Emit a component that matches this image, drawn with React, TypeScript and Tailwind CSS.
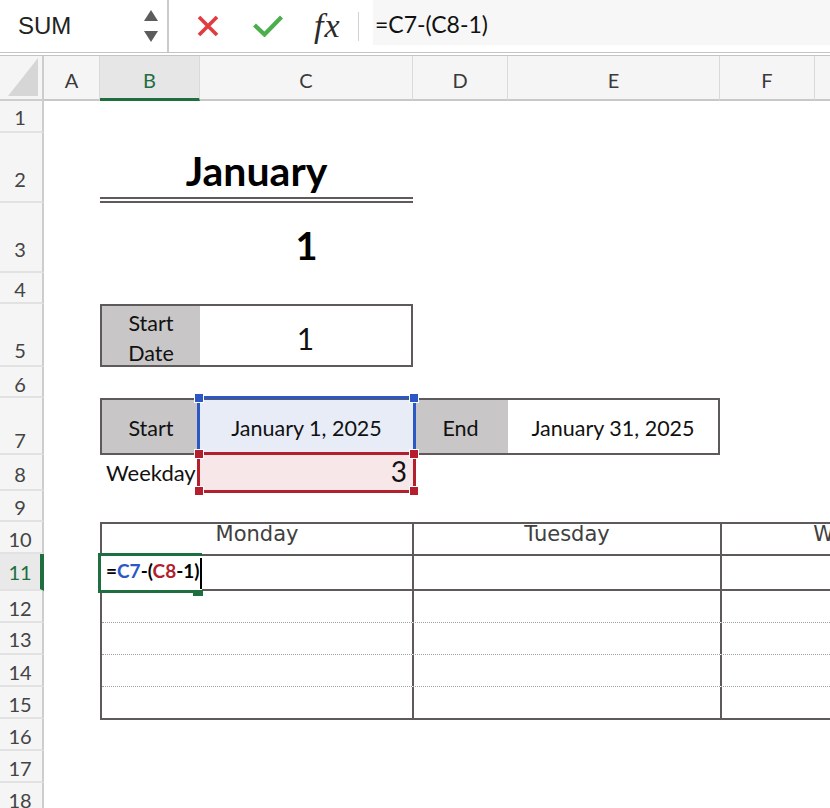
import React from "react";

const colHeads = [
  { label: "A", selected: false },
  { label: "B", selected: true },
  { label: "C", selected: false },
  { label: "D", selected: false },
  { label: "E", selected: false },
  { label: "F", selected: false },
  { label: "G", selected: false },
  { label: "H", selected: false },
];

// row number + its grid placement / bottom padding (Excel bottom-aligns the numbers)
const rowHeads = [
  { n: 1, cls: "row-start-2 pb-[4px]" },
  { n: 2, cls: "row-start-3 pb-[12px]" },
  { n: 3, cls: "row-start-4 pb-[12px]" },
  { n: 4, cls: "row-start-5 pb-[3px]" },
  { n: 5, cls: "row-start-6 pb-[5px]" },
  { n: 6, cls: "row-start-7 pb-[2px]" },
  { n: 7, cls: "row-start-8 pb-[3px]" },
  { n: 8, cls: "row-start-9 pb-[5px]" },
  { n: 9, cls: "row-start-10 pb-[3px]" },
  { n: 10, cls: "row-start-11 pb-[3px]" },
  { n: 11, cls: "row-start-12 pb-[7px]" },
  { n: 12, cls: "row-start-13 pb-[3px]" },
  { n: 13, cls: "row-start-14 pb-[4px]" },
  { n: 14, cls: "row-start-15 pb-[3px]" },
  { n: 15, cls: "row-start-16 pb-[3px]" },
  { n: 16, cls: "row-start-17 pb-[3px]" },
  { n: 17, cls: "row-start-18 pb-[3px]" },
  { n: 18, cls: "row-start-19 pb-[3px]" },
];

const days = ["Monday", "Tuesday", "Wednesday"];

function Handle({ pos, color }: { pos: string; color: string }) {
  return <span className={`absolute h-[10px] w-[10px] border border-white ${pos} ${color}`} />;
}

function FormulaBar() {
  return (
    <div className="flex h-[56px] border-b-4 border-double border-[#c4c4c4]">
      <div className="flex w-[169px] items-center justify-between border-r-2 border-[#cbcbcb] pl-[18px] pr-[9px]">
        <span className="font-['Liberation_Sans',sans-serif] text-[24px] text-[#222]">SUM</span>
        <svg width="14" height="32" viewBox="0 0 14 32">
          <polygon points="7,0 14,11 0,11" fill="#5c5c5c" />
          <polygon points="0,21 14,21 7,32" fill="#5c5c5c" />
        </svg>
      </div>
      <svg className="ml-[28px] self-center" width="22" height="20" viewBox="0 0 22 20">
        <path d="M2 1 L20 19 M20 1 L2 19" stroke="#e13b40" strokeWidth="3.6" fill="none" />
      </svg>
      <svg className="ml-[34px] self-center" width="30" height="22" viewBox="0 0 30 22">
        <path d="M1.5 10 L11.5 19.5 L28.5 2" stroke="#4cae4c" strokeWidth="4.2" fill="none" />
      </svg>
      <span className="ml-[31px] w-[28px] self-center font-['Liberation_Serif',serif] text-[34px] italic leading-[32px] tracking-[1px] text-[#2b2b2b]">
        fx
      </span>
      <span className="ml-[16px] h-[29px] w-px self-center bg-[#d2d2d2]" />
      <div className="ml-[14px] flex h-[45px] flex-1 items-center bg-[#f7f7f7] pl-[2px] pt-[4px] text-[23px] text-[#111]">
        =C7-(C8-1)
      </div>
    </div>
  );
}

export default function App() {
  return (
    <div className="h-[808px] w-[830px] overflow-hidden bg-white font-['Lato',sans-serif] text-[#111]">
      <FormulaBar />

      <div className="grid w-[1005px] grid-cols-[44px_56px_100px_213px_95px_212px_95px_95px_95px] grid-rows-[45px_32px_70px_70px_31px_63px_31px_57px_36px_31px_32px_37px_32px_32px_32px_32px_32px_32px_32px]">
        {/* corner */}
        <div className="col-start-1 row-start-1 border-b-2 border-r-2 border-[#cdcdcd] bg-[#f5f5f5]">
          <svg width="42" height="43" viewBox="0 0 42 43">
            <polygon points="8,40 38,40 38,2" fill="#d6d6d6" />
          </svg>
        </div>

        {colHeads.map((c) => (
          <div
            key={c.label}
            className={
              c.selected
                ? "row-start-1 flex items-center justify-center border-r border-r-[#dadada] border-b-[3px] border-b-[#1f6e3f] bg-[#e6e6e6] pt-[5px] text-[20px] leading-[20px] text-[#1f6e3f]"
                : "row-start-1 flex items-center justify-center border-r border-r-[#dadada] border-b-2 border-b-[#c8c8c8] bg-[#f5f5f5] pt-[4px] text-[20px] leading-[20px] text-[#3a3a3a]"
            }
          >
            {c.label}
          </div>
        ))}

        {rowHeads.map((r) => (
          <div
            key={r.n}
            className={`${r.cls} ${
              r.n === 11
                ? "col-start-1 flex items-end justify-center border-b-2 border-b-[#e2e2e2] border-r-[4px] border-r-[#1f6e3f] bg-[#e9e9e9] text-[20px] leading-[20px] text-[#1f6e3f]"
                : "col-start-1 flex items-end justify-center border-b-2 border-b-[#e2e2e2] border-r-2 border-r-[#cdcdcd] bg-[#f5f5f5] pr-[2px] text-[20px] leading-[20px] text-[#444]"
            }`}
          >
            {r.n}
          </div>
        ))}

        {/* month title */}
        <div className="col-span-2 col-start-3 row-start-3 flex items-end justify-center border-b-[6px] border-double border-b-[#5f5b5b] pb-[6px] text-[41px] font-bold leading-[40px] text-black">
          January
        </div>
        <div className="col-start-4 row-start-4 flex items-end justify-center pb-[9px] text-[38px] font-bold leading-[38px] text-black">
          1
        </div>

        {/* start date */}
        <div className="col-span-2 col-start-3 row-start-6 flex border-2 border-[#5e5a5b]">
          <div className="flex w-[98px] flex-col items-center justify-center bg-[#c8c6c7] pt-[4px] text-[21.5px] leading-[30px]">
            <span>Start</span>
            <span>Date</span>
          </div>
          <div className="flex flex-1 items-center justify-center pt-[4px] text-[30px] leading-[30px]">1</div>
        </div>

        {/* start / end */}
        <div className="col-span-4 col-start-3 row-start-8 grid grid-cols-[98px_213px_95px_1fr] border-2 border-[#5e5a5b] text-[21.5px] leading-[21px]">
          <div className="flex items-center justify-center bg-[#c8c6c7] pt-[3px]">Start</div>
          <div className="flex items-center justify-center bg-[#e8ecf7] pt-[3px]">January 1, 2025</div>
          <div className="flex items-center justify-center bg-[#c8c6c7] pt-[3px]">End</div>
          <div className="flex items-center justify-center pt-[3px]">January 31, 2025</div>
        </div>

        <div className="col-start-3 row-start-9 flex items-center whitespace-nowrap pl-[6px] text-[22px] leading-[22px]">Weekday</div>
        <div className="col-start-4 row-start-9 flex items-center justify-end bg-[#f8e7e8] pb-[4px] pr-[6px] text-[28px] leading-[28px]">
          3
        </div>

        {/* formula reference highlights */}
        <div className="relative z-10 col-start-4 row-start-8 -mx-[3px] -mt-[2px] border-[3px] border-[#2b58c5]">
          <Handle pos="-left-[6px] -top-[6px]" color="bg-[#2b58c5]" />
          <Handle pos="-right-[6px] -top-[6px]" color="bg-[#2b58c5]" />
        </div>
        <div className="relative z-10 col-start-4 row-start-9 -mx-[3px] -mb-[2px] -mt-[3px] border-[3px] border-[#b41f2e]">
          <Handle pos="-left-[6px] -top-[6px]" color="bg-[#b41f2e]" />
          <Handle pos="-right-[6px] -top-[6px]" color="bg-[#b41f2e]" />
          <Handle pos="-left-[6px] -bottom-[6px]" color="bg-[#b41f2e]" />
          <Handle pos="-right-[6px] -bottom-[6px]" color="bg-[#b41f2e]" />
        </div>

        {/* calendar */}
        <div className="col-span-7 col-start-3 row-span-6 row-start-11 w-[930px] self-start justify-self-start border-2 border-[#5e5a5b] font-['DejaVu_Sans',sans-serif] text-[#404040]">
          <div className="grid h-[32px] grid-cols-[312px_308px_306px] border-b-2 border-[#5e5a5b]">
            {days.map((d) => (
              <div key={d} className="flex justify-center border-r-2 border-[#5e5a5b] text-[21px] leading-[20px]">
                {d}
              </div>
            ))}
          </div>
          <div className="grid h-[35px] grid-cols-[312px_308px_306px] border-b-2 border-[#5e5a5b]">
            {days.map((d) => (
              <div key={d} className="border-r-2 border-[#5e5a5b]" />
            ))}
          </div>
          {[0, 1, 2].map((i) => (
            <div key={i} className="grid h-[32px] grid-cols-[312px_308px_306px] border-b border-dotted border-[#a0a0a0]">
              {days.map((d) => (
                <div key={d} className="border-r-2 border-solid border-[#5e5a5b]" />
              ))}
            </div>
          ))}
          <div className="grid h-[31px] grid-cols-[312px_308px_306px]">
            {days.map((d) => (
              <div key={d} className="border-r-2 border-[#5e5a5b]" />
            ))}
          </div>
        </div>

        {/* active cell being edited */}
        <div className="relative z-20 col-start-3 row-start-12 -mb-[2px] -ml-[2px] -mr-[2px] -mt-[1px] flex items-center whitespace-nowrap border-[3px] border-r-0 border-[#1f6e3f] bg-white pl-[5px]">
          <span className="pb-[6px] text-[19px] font-bold leading-[19px] text-black">
            =<span className="text-[#2b58c5]">C7</span>-(<span className="text-[#b41f2e]">C8</span>-1)
          </span>
          <span className="ml-[1px] h-[31px] w-[2px] bg-black" />
          <span className="absolute left-[92px] top-[34px] h-[6px] w-[10px] bg-[#1f6e3f]" />
        </div>
      </div>
    </div>
  );
}
